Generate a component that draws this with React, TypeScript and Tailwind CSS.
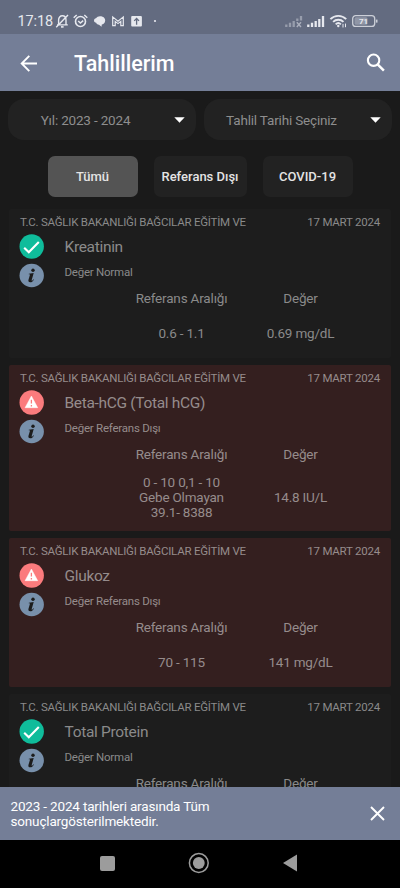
import type { ReactNode } from 'react';

interface LabResult {
  name: string;
  normal: boolean;
  range: string[];
  value?: string;
}

const INSTITUTION = 'T.C. SAĞLIK BAKANLIĞI BAĞCILAR EĞİTİM VE';
const RESULT_DATE = '17 MART 2024';

const results: LabResult[] = [
  { name: 'Kreatinin', normal: true, range: ['0.6 - 1.1'], value: '0.69 mg/dL' },
  {
    name: 'Beta-hCG (Total hCG)',
    normal: false,
    range: ['0 - 10 0,1 - 10', 'Gebe Olmayan', '39.1- 8388'],
    value: '14.8 IU/L',
  },
  { name: 'Glukoz', normal: false, range: ['70 - 115'], value: '141 mg/dL' },
  { name: 'Total Protein', normal: true, range: [] },
];

function StatusBar() {
  return (
    <div className="flex h-[34px] shrink-0 items-start bg-[#636b80] pl-[17.5px] pr-[22px] text-[#e6e8ee]">
      <span className="mt-[12px] w-[36.5px] text-[14.5px] leading-[20px] tracking-[-0.1px]">17:18</span>
      {/* Notification icons */}
      <svg className="mt-[12px] h-[18px] w-[108px]" viewBox="0 0 108 18" fill="none" stroke="currentColor">
        <g strokeWidth="1.4">
          <path d="M4.600 12.600V8c0-2.600 1.600-4.200 3.700-4.200S12 5.400 12 8v4.600M3 12.900h10.800M2.200 15.200L14 3" />
          <path d="M7 14.900h2.600" strokeWidth="1.600" />
        </g>
        <circle cx="26.500" cy="9.500" r="5" strokeWidth="1.600" />
        <path d="M24.200 9l2.200 2.100 2.800-2.500M19.700 5.700l3-2.700M33.300 5.700l-3-2.700" strokeWidth="1.500" />
        <path
          d="M46 4.200c3 0 5.200 1.600 5.200 4.200 0 2.800-2.200 3.700-3.400 4.200l-.3 2.200-2.500-2c-1.700-.2-2.600-1-2.800-2-1.300-.2-2.200-1-2.200-2.300 0-1.200.8-2 2-2.300.8-1.200 2.300-2 4-2z"
          fill="currentColor"
          stroke="none"
        />
        <path d="M58.700 13.700V4.900l5.300 4.300 5.300-4.300v8.800h-2.500V9.400L64 11.600l-2.800-2.200v4.300z" strokeWidth="1.200" />
        <rect x="77.200" y="3.900" width="10.700" height="10.700" rx="1" fill="currentColor" stroke="none" />
        <path d="M82.600 12.700V6.600M80.200 8.900l2.400-2.400L85 8.900" stroke="#636b80" strokeWidth="1.300" />
        <circle cx="101" cy="9" r="1.100" fill="currentColor" stroke="none" />
      </svg>
      <div className="flex-1" />
      {/* Signal, wifi and battery */}
      <svg className="mt-[13px] h-[16px] w-[94px]" viewBox="0 0 94 16" fill="none" stroke="currentColor">
        <g strokeWidth="2.300">
          <path d="M2.300 14v-2.600M6 14V9.700M9.700 14V8M13.300 8V5.500M17 7.500V3" opacity=".4" />
          <path d="M24.300 14v-2.600M28 14V9.700M31.700 14V8M35.300 14V6M39 14V3" />
        </g>
        <path d="M12.800 9.300l4.200 4.700M17 9.300L12.800 14" opacity=".55" strokeWidth="1.400" />
        <g strokeWidth="1.900">
          <path d="M46.400 6.200c4.400-4.500 11.400-4.500 15.800 0" />
          <path d="M49.100 8.900c2.900-2.900 7.500-2.900 10.400 0" />
          <path d="M51.700 11.400c1.500-1.500 3.700-1.500 5.200 0" />
        </g>
        <circle cx="54.300" cy="13" r="1.200" fill="currentColor" stroke="none" />
        <path d="M59 14.500v-3.600M61.500 10.600v3.600" strokeWidth="1" />
        <rect x="68.700" y="2.600" width="22" height="10.800" rx="3" strokeWidth="1.300" opacity=".8" />
        <rect x="70.500" y="4.300" width="13" height="7.400" rx="1.500" fill="currentColor" stroke="none" opacity=".35" />
        <path d="M92.700 6.600v3" strokeWidth="1.600" opacity=".8" />
        <text x="79.500" y="10.900" textAnchor="middle" fontSize="8" fontWeight="700" fill="currentColor" stroke="none">
          71
        </text>
      </svg>
    </div>
  );
}

function AppHeader() {
  return (
    <header className="flex h-[57px] shrink-0 items-center bg-[#747e97] pl-[20px] pr-[15px] text-white">
      <svg className="h-[18px] w-[18px]" viewBox="0 0 18 18" fill="none" stroke="currentColor" strokeWidth="1.900">
        <path d="M17 9.500H2M9.300 1.900L1.700 9.500l7.600 7.600" />
      </svg>
      <h1 className="ml-[36px] flex-1 pt-[2px] text-[21.500px] font-medium leading-[28px]">Tahlillerim</h1>
      <svg className="h-[19px] w-[19px]" viewBox="0 0 19 19" fill="none" stroke="currentColor">
        <circle cx="7.600" cy="7.200" r="5.700" strokeWidth="2.100" />
        <path d="M11.600 11.300l6.300 6.300" strokeWidth="2.500" />
      </svg>
    </header>
  );
}

function SelectBox({ children }: { children: ReactNode }) {
  return (
    <button className="flex h-[41px] flex-1 items-center rounded-[16px] bg-[#222222] pr-[11px] text-[13.500px] tracking-[-0.180px] text-[#8e8e8e]">
      <span className="flex-1 pr-[11px] pt-[2px] text-center">{children}</span>
      <svg className="h-[6px] w-[11px] text-white" viewBox="0 0 11 6" fill="currentColor">
        <path d="M.3.300h10.400L5.500 5.800z" />
      </svg>
    </button>
  );
}

function FilterChip({ label, active = false }: { label: string; active?: boolean }) {
  return (
    <button
      className={`flex h-[41px] items-center justify-center rounded-[7px] pt-px text-[13px] font-medium text-[#e4e4e4] ${
        active ? 'bg-[#545454]' : 'bg-[#222222]'
      } ${label === 'Referans Dışı' ? 'w-[93px]' : 'w-[90px]'}`}
    >
      {label}
    </button>
  );
}

function StateIcon({ normal }: { normal: boolean }) {
  if (normal) {
    return (
      <svg className="h-[25px] w-[25px]" viewBox="0 0 25 25">
        <circle cx="12.700" cy="12.500" r="12.200" fill="#0fbc9b" />
        <path d="M5.200 13.700l4.600 4.600 10-10.400" fill="none" stroke="#fff" strokeWidth="2.100" />
      </svg>
    );
  }
  return (
    <svg className="h-[25px] w-[25px]" viewBox="0 0 25 25">
      <circle cx="12.700" cy="12.500" r="12.200" fill="#fb7b7d" />
      <path d="M12.400 6l6.300 11.700H6.100z" fill="#fff" stroke="#fff" strokeWidth=".5" strokeLinejoin="round" />
      <path d="M12.400 9.800v3.800M12.400 14.900v1.500" stroke="#fb7b7d" strokeWidth="1.300" />
    </svg>
  );
}

function InfoIcon() {
  return (
    <svg className="h-[25px] w-[25px]" viewBox="0 0 25 25">
      <ellipse cx="12.700" cy="12.500" rx="12.200" ry="11.700" fill="#7890ab" />
      <circle cx="14" cy="7.300" r="1.700" fill="#1c1c1c" />
      <path
        d="M9.800 10.700l4.900-.7-2 7c-.2.800.2.900.7.500l1-1.200.5.400c-1 1.700-2.200 2.600-3.700 2.600-1.600 0-2.100-1-1.700-2.500l1.400-4.800c.2-.7 0-.8-1.200-.8z"
        fill="#1c1c1c"
      />
    </svg>
  );
}

function ResultCard({ result }: { result: LabResult }) {
  return (
    <article
      className={`shrink-0 rounded-[2px] px-[11px] ${
        result.normal ? 'bg-[#1d1d1d] text-[#8a8a8a]' : 'bg-[#341f1f] text-[#968c8c]'
      } ${result.range.length > 1 ? 'h-[166px]' : 'h-[149px]'}`}
    >
      <div className="flex h-[25px] items-center justify-between pt-[2px] text-[11.500px] tracking-[-0.230px]">
        <span>{INSTITUTION}</span>
        <span>{RESULT_DATE}</span>
      </div>
      <div className="-ml-px flex h-[56px] gap-[20.500px]">
        <div className="flex flex-col gap-[4px]">
          <StateIcon normal={result.normal} />
          <InfoIcon />
        </div>
        <div>
          <h2 className="text-[15.500px] leading-[27px] tracking-[-0.320px]">{result.name}</h2>
          <p className="text-[11.500px] leading-[23px] tracking-[-0.230px]">
            {result.normal ? 'Değer Normal' : 'Değer Referans Dışı'}
          </p>
        </div>
      </div>
      <div className="ml-[111px] mr-[11px] grid grid-cols-[101px_1fr] text-center text-[13.500px] tracking-[-0.180px]">
        <span className="leading-[17px]">Referans Aralığı</span>
        <span className="leading-[17px]">Değer</span>
      </div>
      {result.value && (
        <div className="ml-[111px] mr-[11px] mt-[12px] grid min-h-[29px] grid-cols-[101px_1fr] items-center text-center text-[13.500px] leading-[15px] tracking-[-0.200px]">
          <span>
            {result.range.map((line) => (
              <span key={line} className="block">
                {line}
              </span>
            ))}
          </span>
          <span>{result.value}</span>
        </div>
      )}
    </article>
  );
}

function NoticeBar() {
  return (
    <div className="flex h-[53px] shrink-0 items-center bg-[#747e97] pl-[10.500px] pr-[15px] text-white">
      <p className="flex-1 text-[13.500px] leading-[15px] tracking-[-0.170px]">
        2023 - 2024 tarihleri arasında Tüm
        <br />
        sonuçlargösterilmektedir.
      </p>
      <svg className="h-[15px] w-[15px]" viewBox="0 0 15 15" stroke="currentColor" strokeWidth="1.900">
        <path d="M1 1l13 13M14 1L1 14" />
      </svg>
    </div>
  );
}

function SystemNav() {
  return (
    <nav className="flex h-[48px] shrink-0 items-center bg-black pl-[100px] text-[#9c9c9c]">
      <span className="mb-[2px] h-[15px] w-[15px] rounded-[2px] bg-current" />
      <svg className="mb-[2px] ml-[73px] h-[22px] w-[22px]" viewBox="0 0 22 22">
        <circle cx="10.800" cy="11" r="9.400" fill="none" stroke="currentColor" strokeWidth="1.500" />
        <circle cx="10.800" cy="11" r="5.900" fill="currentColor" />
      </svg>
      <svg className="mb-[2px] ml-[73px] h-[18px] w-[14px]" viewBox="0 0 14 18" fill="currentColor">
        <path d="M14 .5v17L0 9z" />
      </svg>
    </nav>
  );
}

export default function App() {
  return (
    <div className="flex h-[888px] w-[400px] flex-col overflow-hidden bg-[#1a1a1a] font-['Roboto',sans-serif]">
      <StatusBar />
      <AppHeader />
      <div className="flex shrink-0 gap-[8px] px-[8px] pt-[8px]">
        <SelectBox>Yıl: 2023 - 2024</SelectBox>
        <SelectBox>Tahlil Tarihi Seçiniz</SelectBox>
      </div>
      <div className="flex shrink-0 justify-center gap-[16px] pb-[12px] pt-[16px]">
        <FilterChip label="Tümü" active />
        <FilterChip label="Referans Dışı" />
        <FilterChip label="COVID-19" />
      </div>
      <main className="flex min-h-0 flex-1 flex-col gap-[7px] overflow-hidden px-[9px]">
        {results.map((result) => (
          <ResultCard key={result.name} result={result} />
        ))}
      </main>
      <NoticeBar />
      <SystemNav />
    </div>
  );
}
